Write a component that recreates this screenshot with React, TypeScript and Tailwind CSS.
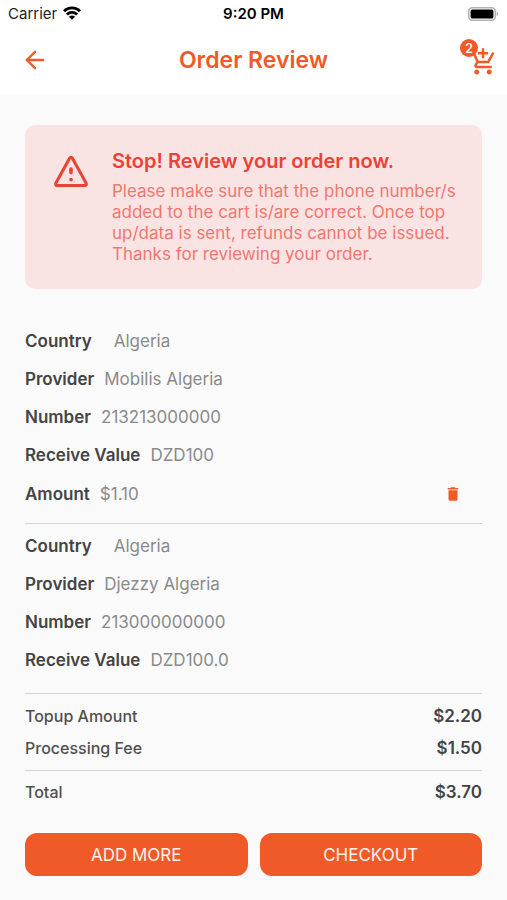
import { ArrowLeft } from "lucide-react";
import { MdAddShoppingCart, MdDelete } from "react-icons/md";

type Row = { label: string; value: string; wide?: boolean };

const orders: { rows: Row[]; amount?: string }[] = [
  {
    rows: [
      { label: "Country", value: "Algeria", wide: true },
      { label: "Provider", value: "Mobilis Algeria" },
      { label: "Number", value: "213213000000" },
      { label: "Receive Value", value: "DZD100" },
    ],
    amount: "$1.10",
  },
  {
    rows: [
      { label: "Country", value: "Algeria", wide: true },
      { label: "Provider", value: "Djezzy Algeria" },
      { label: "Number", value: "213000000000" },
      { label: "Receive Value", value: "DZD100.0" },
    ],
  },
];

const StatusBar = () => {
  return (
    <div className="grid grid-cols-3 items-center h-[26px] px-2 pt-[2px] text-[15px] leading-[24px] text-black">
      <div className="flex items-center gap-[6px]">
        <span className="text-[#222]">Carrier</span>
        <svg className="mb-[2px]" width="18" height="14" viewBox="0 0 18 14" fill="none" stroke="black" strokeWidth="2.8">
          <path d="M1 5.2C5.4 0.8 12.6 0.8 17 5.2" />
          <path d="M3.9 8.5C6.8 5.7 11.2 5.7 14.1 8.5" />
          <path d="M9 13.8L5.9 10.8C7.6 9.2 10.4 9.2 12.1 10.8Z" fill="black" stroke="none" />
        </svg>
      </div>
      <span className="text-center font-semibold whitespace-nowrap">9:20 PM</span>
      <svg className="justify-self-end" width="31" height="14" viewBox="0 0 31 14">
        <rect x="0.8" y="0.8" width="26.4" height="12.4" rx="3.4" fill="white" stroke="#b3b3b3" strokeWidth="1.5" />
        <rect x="2.6" y="2.4" width="22.8" height="9.2" rx="1.6" fill="black" />
        <path d="M28.6 4.8C30.6 5.4 30.6 8.6 28.6 9.2Z" fill="#b3b3b3" />
      </svg>
    </div>
  );
};

const Header = () => {
  return (
    <header className="grid grid-cols-[1fr_auto_1fr] items-center h-[68px] pl-[21px] pr-[9px] text-[#f05a28]">
      <button aria-label="Back" className="justify-self-start">
        <ArrowLeft size={28} strokeWidth={2} />
      </button>
      <h1 className="pr-3 text-[23px] leading-[28px] font-semibold">Order Review</h1>
      <button aria-label="Cart" className="relative justify-self-end mt-[4px]">
        <MdAddShoppingCart size={30} />
        <span className="absolute -top-2 -left-2 flex items-center justify-center w-[18px] h-[18px] rounded-full bg-[#f05a28] text-[13px] leading-[18px] font-medium text-white">
          2
        </span>
      </button>
    </header>
  );
};

const Warning = () => {
  return (
    <div className="flex rounded-[10px] bg-[#fae3e3] py-6 pl-[28px] pr-5 text-[#ea4335]">
      <svg className="shrink-0 mt-[6px] mr-[23px]" width="36" height="33" viewBox="0 0 36 33" fill="none" stroke="currentColor" strokeWidth="3" strokeLinejoin="round" strokeLinecap="round">
        <path d="M16.7 3.1L2.8 28.2C2.2 29.4 2.8 30.6 4.2 30.6H31.8C33.2 30.6 33.8 29.4 33.2 28.2L19.3 3.1C18.7 2 17.3 2 16.7 3.1Z" />
        <path d="M18 14V17.6M18 24.6V24.7" strokeWidth="3.6" />
      </svg>
      <div>
        <h2 className="text-[20px] leading-[24px] font-semibold">Stop! Review your order now.</h2>
        <p className="mt-2 text-[17px] leading-[21px] text-[#ef7770]">
          Please make sure that the phone number/s added to the cart is/are correct. Once top up/data is sent, refunds cannot be issued. Thanks for reviewing your order.
        </p>
      </div>
    </div>
  );
};

const Detail = ({ label, value, wide }: Row) => {
  return (
    <div className="flex items-center h-[38px]">
      <dt className="font-semibold text-[#444]">{label}</dt>
      <dd className={wide ? "ml-[22px]" : "ml-[10px]"}>{value}</dd>
    </div>
  );
};

const Total = ({ label, value }: Row) => {
  return (
    <div className="flex justify-between h-[32px] items-center">
      <span className="text-[16px] font-medium text-[#505050]">{label}</span>
      <span className="font-semibold text-[#444]">{value}</span>
    </div>
  );
};

const App = () => {
  return (
    <div className="min-h-screen bg-[#fafafa] font-['Inter',sans-serif]">
      <div className="bg-white">
        <StatusBar />
        <Header />
      </div>
      <main className="px-[25px] pt-[31px] pb-6 text-[17px] leading-[24px] text-[#8a8a8a]">
        <Warning />
        <div className="mt-[33px]">
          {orders.map((order, index) => (
            <dl key={index} className={order.amount ? "border-b border-[#d4d4d4] pb-[10px]" : "border-b border-[#d4d4d4] pt-[3px] pb-[14px]"}>
              {order.rows.map((row) => (
                <Detail key={row.label} {...row} />
              ))}
              {order.amount && (
                <div className="flex items-center justify-between pt-px pr-5">
                  <Detail label="Amount" value={order.amount} />
                  <button aria-label="Delete" className="text-[#f05a28]">
                    <MdDelete size={18} />
                  </button>
                </div>
              )}
            </dl>
          ))}
        </div>
        <div className="py-[6px] border-b border-[#d4d4d4]">
          <Total label="Topup Amount" value="$2.20" />
          <Total label="Processing Fee" value="$1.50" />
        </div>
        <div className="pt-[5px]">
          <Total label="Total" value="$3.70" />
        </div>
        <div className="grid grid-cols-2 gap-3 mt-[25px] text-[#fff3ec]">
          <button className="h-[43px] rounded-xl bg-[#f05a28]">ADD MORE</button>
          <button className="h-[43px] rounded-xl bg-[#f05a28]">CHECKOUT</button>
        </div>
      </main>
    </div>
  );
};

export default App;
